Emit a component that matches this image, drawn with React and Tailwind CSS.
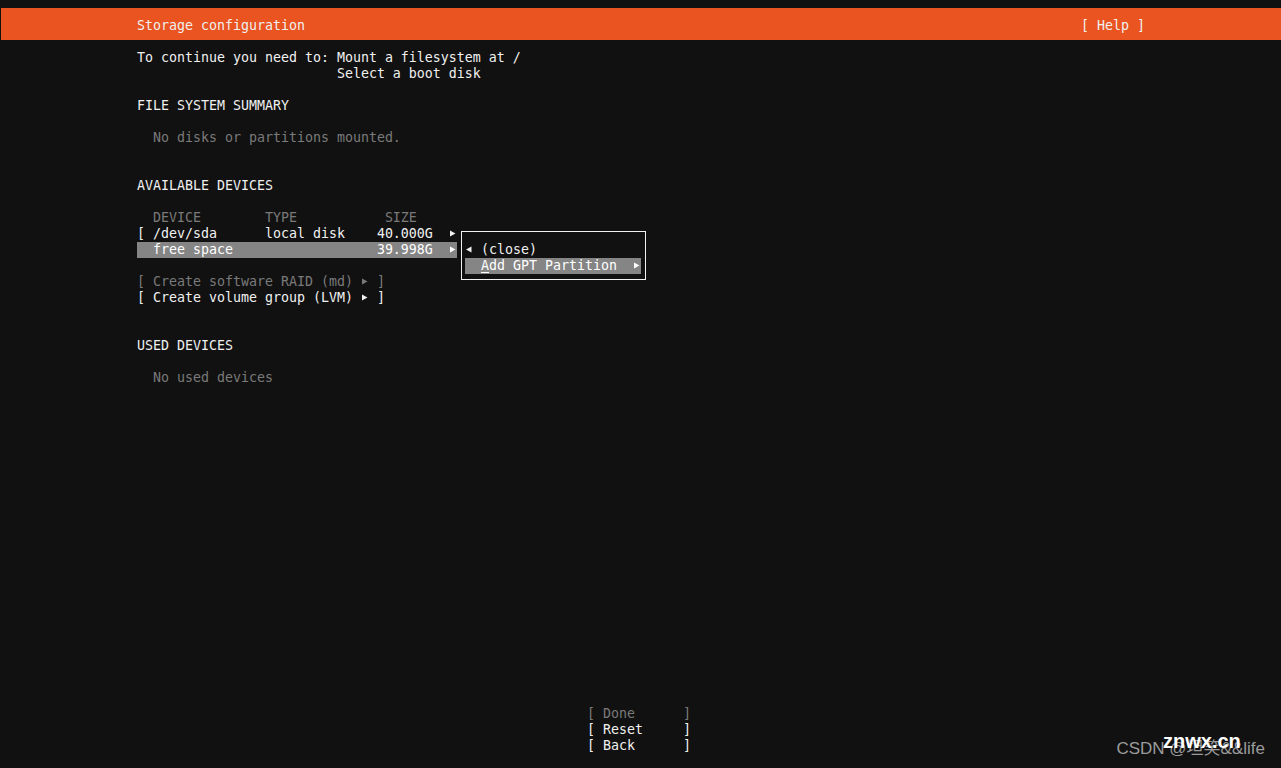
import React from "react";

const mono = { fontFamily: '"DejaVu Sans Mono", "Liberation Mono", monospace' };

// filled triangle that sits in one 8px character cell
function Tri({ left = false }) {
  return (
    <span className="inline-block w-2 h-4 align-top">
      <svg width="8" height="16" viewBox="0 0 8 16" className="block">
        {left ? (
          <polygon points="6.5,4.5 6.5,10.5 1,7.5" fill="currentColor" />
        ) : (
          <polygon points="1,4.5 1,10.5 6.5,7.5" fill="currentColor" />
        )}
      </svg>
    </span>
  );
}

function Line({ children, className = "" }) {
  return <div className={"h-4 leading-4 whitespace-pre " + className}>{children || " "}</div>;
}

function Popup() {
  return (
    <div className="absolute left-[461px] top-[231px] w-[185px] border border-[#f2f2f2] bg-[#111111] pl-[3px] pr-[4px] pt-[10px] pb-[5px]">
      <Line>
        <Tri left />
        {" (close)"}
      </Line>
      <Line className="bg-[#858585] text-white">
        {"  "}
        <span className="underline underline-offset-2">A</span>
        {"dd GPT Partition  "}
        <Tri />
      </Line>
    </div>
  );
}

export default function App() {
  return (
    <div
      className="relative h-[768px] w-full overflow-hidden bg-[#111111] text-[13.29px] text-[#f0f0f0] flex flex-col"
      style={mono}
    >
      {/* title bar */}
      <div className="mt-2 ml-px h-8 bg-[#e95420] flex items-center justify-between pl-[136px] pr-[136px] pt-[3px]">
        <span className="whitespace-pre">Storage configuration</span>
        <span className="whitespace-pre">[ Help ]</span>
      </div>

      {/* body */}
      <div className="flex-1 ml-[137px] mt-[10px]">
        <Line>To continue you need to: Mount a filesystem at /</Line>
        <Line>{"                         Select a boot disk"}</Line>
        <Line />
        <Line>FILE SYSTEM SUMMARY</Line>
        <Line />
        <Line className="text-[#7a7a7a]">{"  No disks or partitions mounted."}</Line>
        <Line />
        <Line />
        <Line>AVAILABLE DEVICES</Line>
        <Line />
        <Line className="text-[#7a7a7a]">{"  DEVICE        TYPE           SIZE"}</Line>
        <Line>
          {"[ /dev/sda      local disk    40.000G  "}
          <Tri />
        </Line>
        <Line className="w-[320px] bg-[#858585] text-white">
          {"  free space                  39.998G  "}
          <Tri />
        </Line>
        <Line />
        <Line className="text-[#7a7a7a]">
          {"[ Create software RAID (md) "}
          <Tri />
          {" ]"}
        </Line>
        <Line>
          {"[ Create volume group (LVM) "}
          <Tri />
          {" ]"}
        </Line>
        <Line />
        <Line />
        <Line>USED DEVICES</Line>
        <Line />
        <Line className="text-[#7a7a7a]">{"  No used devices"}</Line>
      </div>

      {/* buttons */}
      <div className="ml-[587px] mb-[14px]">
        <Line className="text-[#7a7a7a]">{"[ Done      ]"}</Line>
        <Line>{"[ Reset     ]"}</Line>
        <Line>{"[ Back      ]"}</Line>
      </div>

      <Popup />

      {/* watermark */}
      <div
        className="absolute right-[16px] top-[740px] text-[17px] leading-[18px] text-[#9b9b9b] whitespace-nowrap"
        style={{ fontFamily: '"Liberation Sans", "Noto Sans CJK SC", sans-serif' }}
      >
        CSDN @坦笑&amp;&amp;life
      </div>
      <div
        className="absolute left-[1163px] top-[731px] text-[20px] leading-[20px] font-bold text-white whitespace-nowrap"
        style={{ fontFamily: '"Liberation Sans", sans-serif' }}
      >
        znwx.cn
      </div>
    </div>
  );
}
